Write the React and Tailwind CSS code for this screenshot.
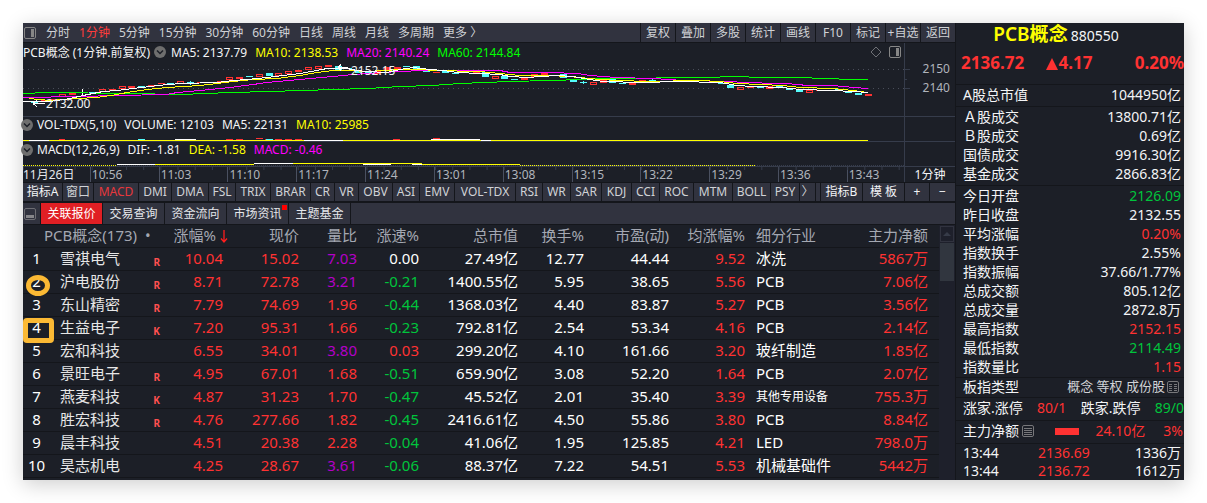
import React from "react";
import clsx from "clsx";

const periods = ["分时", "1分钟", "5分钟", "15分钟", "30分钟", "60分钟", "日线", "周线", "月线", "多周期", "更多 〉"];
const tools = ["复权", "叠加", "多股", "统计", "画线", "F10", "标记", "+自选", "返回"];
const times = ["11月26日", "10:56", "11:03", "11:10", "11:17", "11:24", "13:01", "13:08", "13:15", "13:22", "13:29", "13:36", "13:43"];
const tabs = ["关联报价", "交易查询", "资金流向", "市场资讯", "主题基金"];

const indicators = [
    ["指标A", "w-[39px] text-gray-100"],
    ["窗口", "w-[30px]"],
    ["MACD", "w-[44px] text-[#e8373c]"],
    ["DMI", "w-[32px]"],
    ["DMA", "w-[36px]"],
    ["FSL", "w-[26px]"],
    ["TRIX", "w-[34px]"],
    ["BRAR", "w-[39px]"],
    ["CR", "w-[23px]"],
    ["VR", "w-[23px]"],
    ["OBV", "w-[33px]"],
    ["ASI", "w-[26px]"],
    ["EMV", "w-[34px]"],
    ["VOL-TDX", "w-[60px]"],
    ["RSI", "w-[26px]"],
    ["WR", "w-[27px]"],
    ["SAR", "w-[30px]"],
    ["KDJ", "w-[29px]"],
    ["CCI", "w-[27px]"],
    ["ROC", "w-[33px]"],
    ["MTM", "w-[38px]"],
    ["BOLL", "w-[37px]"],
    ["PSY", "w-[28px]"],
    ["〉", "w-[15px]"],
];

const indicatorsRight = [
    ["指标B", "w-[41px]"],
    ["模 板", "w-[41px]"],
    ["+", "w-[24px]"],
    ["−", "w-[25px]"],
];

// x center, top, height, kind (r = filled up, h = hollow up, c = down)
const candles = [
    [11, 40, 1, "c"], [21, 38, 2, "r"], [30, 37, 2, "r"], [39, 32, 3, "h"], [49, 31, 2, "h"], [69, 30, 1, "c"],
    [79, 27, 3, "h"], [89, 27, 2, "r"], [99, 24, 3, "h"], [108, 24, 2, "r"], [118, 24, 1, "c"], [128, 23, 2, "r"],
    [138, 21, 1, "r"], [147, 21, 1, "c"], [157, 19, 3, "h"], [167, 20, 1, "c"], [177, 20, 1, "r"], [197, 19, 1, "r"],
    [206, 15, 3, "h"], [216, 15, 2, "r"], [226, 14, 1, "c"], [236, 12, 3, "h"], [246, 11, 3, "c"], [255, 11, 3, "h"],
    [265, 9, 3, "h"], [275, 8, 2, "r"], [285, 5, 3, "h"], [295, 4, 3, "h"], [305, 3, 2, "r"], [315, 4, 4, "c"],
    [325, 6, 1, "c"], [335, 9, 2, "c"], [345, 9, 2, "c"], [354, 9, 3, "r"], [364, 5, 3, "r"], [374, 5, 2, "r"],
    [383, 4, 1, "c"], [393, 4, 3, "c"], [403, 8, 2, "c"], [413, 10, 1, "r"], [422, 9, 2, "c"], [432, 11, 1, "c"],
    [453, 9, 2, "r"], [462, 10, 5, "c"], [472, 14, 3, "h"], [481, 14, 3, "c"], [491, 17, 1, "c"], [501, 16, 2, "h"],
    [511, 12, 3, "r"], [521, 10, 3, "r"], [530, 10, 1, "c"], [540, 12, 4, "c"], [550, 17, 3, "c"], [560, 20, 1, "c"],
    [570, 20, 3, "h"], [580, 18, 3, "r"], [589, 17, 4, "c"], [599, 21, 1, "c"], [609, 21, 2, "r"], [619, 18, 2, "r"],
    [629, 18, 2, "c"], [638, 19, 1, "c"], [659, 18, 1, "r"], [688, 20, 1, "r"], [698, 21, 1, "c"], [707, 23, 3, "c"],
    [717, 25, 3, "h"], [727, 24, 2, "r"], [737, 25, 1, "c"], [746, 24, 3, "r"], [756, 24, 2, "c"], [766, 26, 2, "c"],
    [776, 28, 2, "c"], [786, 28, 3, "h"], [796, 28, 1, "r"], [815, 27, 1, "c"], [825, 29, 2, "c"], [835, 31, 2, "c"],
    [845, 32, 2, "r"],
];

const averages = [
    ["#00ff00", "0,31 25,30 104,31 160,32 180,31 210,30 245,29 280,28 310,27 345,26 377,24 409,23 437,21 487,19 527,18 559,17 584,16 683,15 712,14 740,15 777,15 801,16 831,17 845,17"],
    ["#ff00ff", "0,35 57,34 94,33 144,32 154,30 177,28 207,25 230,22 244,20 277,17 310,14 330,12 360,10 377,9 399,8 477,8 487,10 527,10 555,11 567,13 594,15 630,16 660,18 710,19 717,20 760,21 777,22 782,23 810,23 831,25 845,26"],
    ["#ffff00", "6,36 27,38 54,36 74,35 94,32 104,30 124,27 144,25 177,23 194,21 210,19 230,17 254,16 277,13 294,10 310,8 327,8 344,9 377,7 399,7 410,8 457,9 467,10 477,11 487,12 497,13 527,13 544,14 557,15 577,17 597,18 624,19 677,18 697,19 714,21 737,22 760,23 777,25 810,26 830,28 845,30"],
    ["#ffffff", "0,39 27,39 47,36 60,33 80,29 94,28 110,26 127,24 144,22 160,21 194,20 210,18 224,17 244,15 260,13 277,11 294,8 304,6 324,6 334,8 344,9 364,10 377,7 390,5 407,7 420,8 434,10 457,11 477,12 487,14 504,15 534,13 550,14 567,17 580,19 620,20 654,19 697,20 714,23 730,24 760,25 777,27 810,28 830,29 845,30"],
];

const columns = [
    ["涨幅%", "w-[61px]"],
    ["现价", "w-[76px]"],
    ["量比", "w-[58px]"],
    ["涨速%", "w-[62px]"],
    ["总市值", "w-[99px]"],
    ["换手%", "w-[66px]"],
    ["市盈(动)", "w-[85px]"],
    ["均涨幅%", "w-[76px]"],
];

const stocks = [
    { name: "雪祺电气", flag: "R", rise: "10.04", price: "15.02", ratio: "7.03", speed: "0.00", cap: "27.49亿", turn: "12.77", pe: "44.44", avg: "9.52", trade: "冰洗", flow: "5867万" },
    { name: "沪电股份", flag: "R", rise: "8.71", price: "72.78", ratio: "3.21", speed: "-0.21", cap: "1400.55亿", turn: "5.95", pe: "38.65", avg: "5.56", trade: "PCB", flow: "7.06亿", mark: "circle" },
    { name: "东山精密", flag: "R", rise: "7.79", price: "74.69", ratio: "1.96", speed: "-0.44", cap: "1368.03亿", turn: "4.40", pe: "83.87", avg: "5.27", trade: "PCB", flow: "3.56亿" },
    { name: "生益电子", flag: "K", rise: "7.20", price: "95.31", ratio: "1.66", speed: "-0.23", cap: "792.81亿", turn: "2.54", pe: "53.34", avg: "4.16", trade: "PCB", flow: "2.14亿", mark: "box" },
    { name: "宏和科技", flag: "", rise: "6.55", price: "34.01", ratio: "3.80", speed: "0.03", cap: "299.20亿", turn: "4.10", pe: "161.66", avg: "3.20", trade: "玻纤制造", flow: "1.85亿" },
    { name: "景旺电子", flag: "R", rise: "4.95", price: "67.01", ratio: "1.68", speed: "-0.51", cap: "659.90亿", turn: "3.08", pe: "52.20", avg: "1.64", trade: "PCB", flow: "2.07亿" },
    { name: "燕麦科技", flag: "K", rise: "4.87", price: "31.23", ratio: "1.70", speed: "-0.47", cap: "45.52亿", turn: "2.01", pe: "35.40", avg: "3.39", trade: "其他专用设备", flow: "755.3万" },
    { name: "胜宏科技", flag: "R", rise: "4.76", price: "277.66", ratio: "1.82", speed: "-0.45", cap: "2416.61亿", turn: "4.50", pe: "55.86", avg: "3.80", trade: "PCB", flow: "8.84亿" },
    { name: "晨丰科技", flag: "", rise: "4.51", price: "20.38", ratio: "2.28", speed: "-0.04", cap: "41.06亿", turn: "1.95", pe: "125.85", avg: "4.21", trade: "LED", flow: "798.0万" },
    { name: "昊志机电", flag: "", rise: "4.25", price: "28.67", ratio: "3.61", speed: "-0.06", cap: "88.37亿", turn: "7.22", pe: "54.51", avg: "5.53", trade: "机械基础件", flow: "5442万" },
];

const turnover = [
    ["Ａ股成交", "13800.71亿"],
    ["Ｂ股成交", "0.69亿"],
    ["国债成交", "9916.30亿"],
    ["基金成交", "2866.83亿"],
];

const indexStats = [
    ["今日开盘", "2126.09", "text-[#00c43c]"],
    ["昨日收盘", "2132.55"],
    ["平均涨幅", "0.20%", "text-[#ff3232]"],
    ["指数换手", "2.55%"],
    ["指数振幅", "37.66/1.77%"],
    ["总成交额", "805.12亿"],
    ["总成交量", "2872.8万"],
    ["最高指数", "2152.15", "text-[#ff3232]"],
    ["最低指数", "2114.49", "text-[#00c43c]"],
    ["指数量比", "1.15", "text-[#ff3232]"],
];

const deals = [
    ["13:44", "2136.69", "1336万"],
    ["13:44", "2136.72", "1612万"],
];

const speedColor = (v) => {
    if (v.startsWith("-")) return "text-[#00c43c]";
    return v === "0.00" ? "text-white" : "text-[#ff3232]";
};

function Toggle() {
    return (
        <button aria-label="展开" className="shrink-0">
            <svg width="12" height="12" viewBox="0 0 12 12">
                <circle cx="6" cy="6" r="6" fill="#6e6e6e" />
                <path d="M3 4.5l3 3 3-3" fill="none" stroke="#1c1f27" strokeWidth="1.5" />
            </svg>
        </button>
    );
}

function PaneIcon() {
    return (
        <svg width="12" height="12" viewBox="0 0 12 12">
            <rect x="0.5" y="0.5" width="11" height="11" rx="1.5" fill="none" stroke="#868686" />
            <rect x="7" y="2" width="3" height="8" fill="#868686" />
        </svg>
    );
}

function StatRow({ label, value, color }) {
    return (
        <div className="flex justify-between leading-[19px]">
            <span>{label}</span>
            <span className={color}>{value}</span>
        </div>
    );
}

function Toolbar() {
    return (
        <div className="flex h-[20px] border-b border-[#14161b] bg-[#31333f] text-xs leading-[19px] text-[#d0d2d6]">
            <div className="flex flex-1 items-center gap-[9px] pl-px">
                <button aria-label="侧栏" className="mr-px">
                    <PaneIcon />
                </button>
                {periods.map((p) => (
                    <button key={p} className={clsx("whitespace-nowrap", p === "1分钟" && "text-[#ff3c3c]")}>
                        {p}
                    </button>
                ))}
            </div>
            {tools.map((t) => (
                <button key={t} className="w-[35px] whitespace-nowrap border-l border-[#14161b] text-center">
                    {t}
                </button>
            ))}
        </div>
    );
}

function PriceChart() {
    return (
        <div className="flex h-[74px] border-b border-[#363c4b]">
            <div className="min-w-0 flex-1">
                <div className="mb-px flex h-[18px] items-center gap-2 whitespace-nowrap leading-[17px]">
                    <span className="flex items-center gap-1">
                        PCB概念 (1分钟.前复权)
                        <Toggle />
                    </span>
                    <span className="-ml-[3px]">MA5: 2137.79</span>
                    <span className="text-[#ffff00]">MA10: 2138.53</span>
                    <span className="text-[#ff00ff]">MA20: 2140.24</span>
                    <span className="text-[#00ff00]">MA60: 2144.84</span>
                    <span className="ml-auto flex items-center gap-[7px] pr-[3px]">
                        <svg width="12" height="12" viewBox="0 0 12 12">
                            <path d="M6 1l5 5-5 5-5-5z" fill="none" stroke="#6e7076" />
                        </svg>
                        <PaneIcon />
                    </span>
                </div>
                <div className="relative">
                    <svg className="block h-[54px] w-full" viewBox="0 0 881 54" preserveAspectRatio="none" shapeRendering="crispEdges">
                        <path d="M0 7.5H881M0 26.5H881" stroke="#4a4e5a" strokeDasharray="1 4" />
                        {candles.map(([x, y, h, kind]) =>
                            kind === "h" ? (
                                <rect key={x} x={x - 2.5} y={y + 0.5} width="6" height={h - 1} fill="none" stroke="#ff3232" />
                            ) : (
                                <rect key={x} x={x - 3} y={y} width="7" height={h} fill={kind === "r" ? "#ff3232" : "#54fcfc"} />
                            )
                        )}
                        <path d="M59.5 27v8" stroke="#fff" />
                        <path d="M167.5 19v4M560.5 19v3M629.5 17v4" stroke="#54fcfc" />
                        {averages.map(([color, points]) => (
                            <polyline key={color} points={points} transform="translate(0 .5)" fill="none" stroke={color} />
                        ))}
                        <path d="M10 41.5h12M10 41.5l4-3M10 41.5l4 3" fill="none" stroke="#fff" />
                        <path d="M315 5.5h10M315 5.5l3-3M315 5.5l3 3" fill="none" stroke="#fff" />
                    </svg>
                    <span className="absolute left-[23px] top-[34px] leading-4">2132.00</span>
                    <span className="absolute left-[328px] top-px leading-4">2152.15</span>
                </div>
            </div>
            <div className="relative w-[51px] border-l border-[#363c4b] pr-[5px] pt-4 text-right leading-[19px] text-[#b0b4bc]">
                <svg className="absolute left-0 top-0" width="5" height="73" viewBox="0 0 5 73">
                    <path d="M0 26.5h5M0 36.5h2M0 45.5h5" stroke="#363c4b" />
                </svg>
                <p>2150</p>
                <p>2140</p>
            </div>
        </div>
    );
}

function SubChart({ legend, children }) {
    return (
        <div className="flex h-[25px] border-b border-[#363c4b]">
            <div className="min-w-0 flex-1">
                <div className="flex h-4 items-center gap-2 whitespace-nowrap leading-4">
                    <span className="-ml-[2px] -mr-1 flex">
                        <Toggle />
                    </span>
                    {legend}
                </div>
                <svg className="block h-2 w-full" viewBox="0 0 881 8" preserveAspectRatio="none" shapeRendering="crispEdges">
                    {children}
                </svg>
            </div>
            <div className="w-[51px] border-l border-[#363c4b]" />
        </div>
    );
}

function TimeAxis() {
    return (
        <div className="flex h-[16px] border-b border-[#14161b] leading-[15px] text-[#b0b4bc]">
            <div className="relative flex min-w-0 flex-1">
                <svg className="absolute left-0 top-0 h-[3px] w-full" viewBox="0 0 881 3" preserveAspectRatio="none">
                    <path d="M0 1.5H881" stroke="#363c4b" strokeWidth="3" strokeDasharray="1 16.17" />
                </svg>
                {times.map((t, i) => (
                    <span
                        key={t}
                        className={clsx(
                            "min-w-0 basis-0 whitespace-nowrap",
                            i === 0 ? "grow-[69] text-gray-200" : "border-l border-[#4a5060] pl-px",
                            i > 0 && (i === times.length - 1 ? "grow-[57]" : "grow-[69]")
                        )}
                    >
                        {t}
                    </span>
                ))}
            </div>
            <span className="w-[51px] border-l border-[#363c4b] text-center text-gray-100">1分钟</span>
        </div>
    );
}

function IndicatorBar() {
    return (
        <div className="flex h-[20px] gap-px overflow-hidden border-b-2 border-[#14161b] bg-[#14161b] leading-[18px] text-[#d0d2d6]">
            {indicators.map(([name, cls]) => (
                <button key={name} className={clsx("flex shrink-0 justify-center whitespace-nowrap bg-[#31333f]", cls)}>
                    {name}
                </button>
            ))}
            <span className="flex-1 bg-[#31333f]" />
            {indicatorsRight.map(([name, cls]) => (
                <button key={name} className={clsx("shrink-0 whitespace-nowrap bg-[#31333f] text-center text-gray-100", cls)}>
                    {name}
                </button>
            ))}
        </div>
    );
}

function TabBar() {
    return (
        <div className="flex h-[22px] gap-px border-b border-[#14161b] bg-[#14161b] leading-[21px] text-gray-200">
            <button aria-label="收起" className="flex w-[17px] items-center bg-[#31333f] pl-px">
                <svg width="12" height="12" viewBox="0 0 12 12">
                    <rect x="0.5" y="0.5" width="11" height="11" rx="1.5" fill="none" stroke="#6e6e74" />
                    <rect x="2" y="7" width="8" height="3" fill="#86868a" />
                </svg>
            </button>
            {tabs.map((t, i) => (
                <button key={t} className={clsx("relative w-[61px] whitespace-nowrap", i === 0 ? "bg-[#e01f24] text-white" : "bg-[#31333f]")}>
                    {t}
                    {t === "市场资讯" && <span className="absolute right-px top-[2px] size-[5px] bg-[#ff0000]" />}
                </button>
            ))}
            <span className="flex-1 bg-[#31333f]" />
        </div>
    );
}

function StockTable() {
    return (
        <div className="flex flex-1">
            <table className="flex-1 table-fixed border-collapse self-start text-right text-[15px]">
                <thead>
                    <tr className="h-[22px] border-b border-[#14161b] leading-[21px] text-[#a4a8b2]">
                        <th className="w-[27px] p-0" />
                        <th className="w-[118px] p-0 text-left font-normal">
                            <span className="-ml-[6px] whitespace-nowrap">PCB概念(173)</span>
                            <span className="ml-2">•</span>
                        </th>
                        {columns.map(([name, cls], i) => (
                            <th key={name} className={clsx("whitespace-nowrap p-0 font-normal", cls, i === 0 ? "pr-px" : "pr-[6px]")}>
                                {name}
                                {i === 0 && (
                                    <svg className="ml-1 inline-block align-[-2px]" width="8" height="13" viewBox="0 0 8 13">
                                        <path d="M4 0v12M1 8.5l3 3.5 3-3.5" fill="none" stroke="#ff1e1e" strokeWidth="1.3" />
                                    </svg>
                                )}
                            </th>
                        ))}
                        <th className="w-[81px] whitespace-nowrap p-0 pl-[5px] text-left font-normal">细分行业</th>
                        <th className="w-[107px] p-0 pr-[11px] font-normal">主力净额</th>
                    </tr>
                </thead>
                <tbody>
                    {stocks.map((s, i) => (
                        <tr key={s.name} className="h-[23px] border-b border-[#14161b] align-top leading-[20px] text-white">
                            <td className="relative p-0 text-center">
                                {i + 1}
                                {s.mark === "circle" && (
                                    <span className="absolute left-[3px] top-[4px] h-[21px] w-[24px] rounded-[50%] border-[5px] border-[#fbb934]" />
                                )}
                                {s.mark === "box" && (
                                    <span className="absolute left-0 top-px h-[25px] w-[31px] rounded-[4px] border-[5px] border-[#fbb934]" />
                                )}
                            </td>
                            <td className="p-0 pl-[10px] pr-2">
                                <div className="flex justify-between text-[#e6e6e6]">
                                    <span>{s.name}</span>
                                    <span className="pt-[6px] text-[10px] font-bold leading-4 text-[#ff5050]">{s.flag}</span>
                                </div>
                            </td>
                            <td className="p-0 pr-[6px] text-[#ff3232]">{s.rise}</td>
                            <td className="p-0 pr-[6px] text-[#ff3232]">{s.price}</td>
                            <td className={clsx("p-0 pr-[6px]", Number(s.ratio) > 3 ? "text-[#b400c8]" : "text-[#ff3232]")}>{s.ratio}</td>
                            <td className={clsx("p-0 pr-[6px]", speedColor(s.speed))}>{s.speed}</td>
                            <td className="p-0 pr-[6px]">{s.cap}</td>
                            <td className="p-0 pr-[6px]">{s.turn}</td>
                            <td className="p-0 pr-[6px]">{s.pe}</td>
                            <td className="p-0 pr-[6px] text-[#ff3232]">{s.avg}</td>
                            <td className={clsx("whitespace-nowrap p-0 pl-[5px] text-left", s.trade.length > 5 && "text-xs leading-[22px]")}>{s.trade}</td>
                            <td className="p-0 pr-[11px] text-[#ff3232]">{s.flow}</td>
                        </tr>
                    ))}
                </tbody>
            </table>
            {/* Scrollbar */}
            <div className="w-4 bg-[#1e202b] px-px pt-px">
                <button aria-label="向上" className="flex h-[16px] w-[14px] items-center justify-center border border-[#31333f]">
                    <svg width="8" height="4" viewBox="0 0 8 4">
                        <path d="M4 0l4 4H0z" fill="#363b48" />
                    </svg>
                </button>
                <div className="mt-px h-[38px] w-[14px] bg-[#31363f]" />
            </div>
        </div>
    );
}

function IndexPanel() {
    return (
        <aside className="w-[229px] shrink-0 border-l border-[#14161b] text-sm text-gray-100 *:border-[#14161b] *:pl-[7px] *:pr-[3px]">
            <div className="h-[62px] border-b">
                <h1 className="flex items-baseline justify-center gap-[3px] whitespace-nowrap pr-8 leading-[22px]">
                    <span className="text-[19px] font-semibold text-[#ffff00]">PCB概念</span>
                    <span>880550</span>
                </h1>
                <div className="-ml-[2px] -mr-[3px] flex justify-between pt-1 text-[17px] font-bold leading-[24px] text-[#ff3232]">
                    <span>2136.72</span>
                    <span className="flex items-center">
                        <svg className="mt-[2px]" width="12" height="12" viewBox="0 0 12 12">
                            <path d="M6 0l6 12H0z" fill="#ff3232" />
                        </svg>
                        4.17
                    </span>
                    <span className="pl-5">0.20%</span>
                </div>
            </div>
            <div className="h-[22px] border-b">
                <StatRow label="A股总市值" value="1044950亿" />
            </div>
            <div className="border-b pb-[2px]">
                {turnover.map(([label, value]) => (
                    <StatRow key={label} label={label} value={value} />
                ))}
            </div>
            <div className="border-b pb-px">
                {indexStats.map(([label, value, color]) => (
                    <StatRow key={label} label={label} value={value} color={color} />
                ))}
            </div>
            <div className="flex h-[20px] items-center border-b pb-[2px] leading-[17px]">
                <span className="mr-auto">板指类型</span>
                <span className="mr-[2px] text-[13px] text-[#d0d2d6]">概念 等权 成份股</span>
                <svg className="mr-[2px]" width="12" height="12" viewBox="0 0 12 12">
                    <rect x="0.5" y="0.5" width="11" height="11" rx="1.5" fill="none" stroke="#77777a" />
                    <path d="M2 3.5h3M7 3.5h3M2 5.5h3M7 5.5h3M2 7.5h3M7 7.5h3M2 9.5h3M7 9.5h3" stroke="#77777a" />
                </svg>
            </div>
            <div className="flex h-[23px] justify-between whitespace-nowrap border-b leading-[19px]">
                <span>涨家.涨停</span>
                <span className="text-[#ff3232]">80/1</span>
                <span>跌家.跌停</span>
                <span className="-mr-[3px] text-[#00c43c]">89/0</span>
            </div>
            <div className="flex h-[23px] items-center whitespace-nowrap border-b pb-[2px] leading-[20px]">
                <span>主力净额</span>
                <svg className="ml-[3px]" width="12" height="12" viewBox="0 0 12 12">
                    <rect x="0.5" y="0.5" width="11" height="11" rx="1.5" fill="none" stroke="#77777a" />
                    <path d="M2 3.5h8M2 5.5h8M2 7.5h8M2 9.5h8" stroke="#77777a" />
                </svg>
                <span className="ml-[21px] h-[7px] w-6 bg-[#ff3232]" />
                <span className="ml-auto text-[#ff3232]">24.10亿</span>
                <span className="-mr-[2px] ml-[18px] text-[#ff3232]">3%</span>
            </div>
            <div className="leading-[18px]">
                {deals.map(([time, price, amount]) => (
                    <div key={price} className="flex">
                        <span className="w-[75px]">{time}</span>
                        <span className="text-[#ff3232]">{price}</span>
                        <span className="ml-auto">{amount}</span>
                    </div>
                ))}
            </div>
        </aside>
    );
}

export default function App() {
    return (
        <main className="bg-white p-[23px] font-['Noto_Sans','Noto_Sans_CJK_SC',sans-serif]">
            <div className="flex bg-[#1c1f27] shadow-[0_4px_20px_rgba(0,0,0,0.2)]">
                <section className="flex min-w-0 flex-1 flex-col text-xs text-gray-100">
                    <Toolbar />
                    <PriceChart />
                    <SubChart
                        legend={
                            <>
                                <span>VOL-TDX(5,10)</span>
                                <span>VOLUME: 12103</span>
                                <span>MA5: 22131</span>
                                <span className="text-[#ffff00]">MA10: 25985</span>
                            </>
                        }
                    >
                        <path d="M0 7.5H4M36 6.5h6M203 6.5h7M213 6.5h7M233 5.5h7M242 6.5h7M252 6.5h7M262 6.5h7M272 6.5h7M370 6.5h7M410 5.5h7" stroke="#ff3232" />
                        <path d="M115 6.5h7M243 6.5h7" stroke="#54fcfc" />
                        <path d="M0 7.5H845" stroke="#ffff00" />
                        <path d="M6 7.5h20M152 6.5h21M281 7.5h39M408 6.5h49M458 7.5h10" stroke="#fff" />
                    </SubChart>
                    <SubChart
                        legend={
                            <>
                                <span>MACD(12,26,9)</span>
                                <span>DIF: -1.81</span>
                                <span className="text-[#ffff00]">DEA: -1.58</span>
                                <span className="text-[#ff00ff]">MACD: -0.46</span>
                            </>
                        }
                    >
                        <path d="M0 7.5H881" stroke="#363c4b" strokeDasharray="1 1" />
                        <path d="M0 7.5H94M497 7.5H733" stroke="#ffff00" strokeDasharray="1 1" />
                        <path d="M94 6.5H231M231 5.5H399M399 6.5H497" stroke="#ffff00" />
                        <path d="M94 6.5h38M231 5.5h39M340 6.5h28M389 6.5h10" stroke="#fff" />
                    </SubChart>
                    <TimeAxis />
                    <IndicatorBar />
                    <TabBar />
                    <StockTable />
                </section>
                <IndexPanel />
            </div>
        </main>
    );
}
